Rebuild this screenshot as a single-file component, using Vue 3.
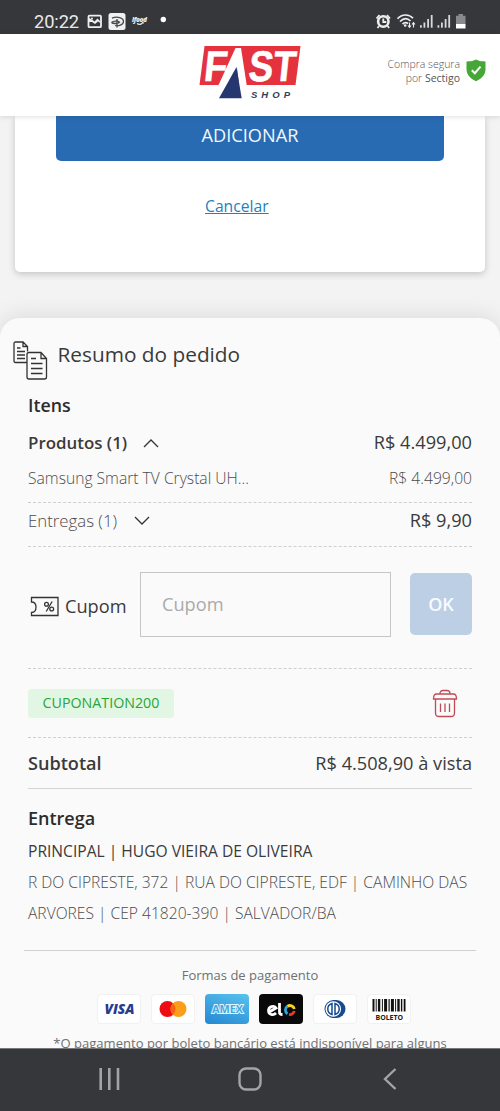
<script setup>
const bars = [
  [0, 2], [3.2, 1], [5.4, 2.4], [9.4, 1], [11.6, 3], [16, 1.2], [18.4, 3], [22.6, 1], [24.8, 2.4], [28.4, 1.4], [31.2, 1.8],
]
const signals = [0, 17.5]
</script>

<template>
  <div class="phone">
    <header class="status">
      <span class="clock">20:22</span>
      <svg class="status-left" width="84" height="20" viewBox="84 11 84 20">
        <rect x="88.500" y="15.700" width="12.500" height="11.500" rx="1" fill="none" stroke="#eee" stroke-width="1.800" />
        <path d="M89 22v-4l3 1.500 2.500 2 3-3 3 3v1.500l-2.500-1.500-3 2.500-3-2z" fill="#eee" />
        <circle cx="92" cy="18.500" r="1" fill="#eee" />
        <rect x="108.500" y="13" width="17" height="17" rx="2.500" fill="#f1f1f2" />
        <path d="M112 18.200c5-2.200 11.500-.5 11.500 3.300 0 3.500-5.500 5-8.500 4M117 19v8.500M111.500 22.500c2-2 7-1.500 8-.3-1.500 1.600-6.500 1.800-8 .3" fill="none" stroke="#47484c" stroke-width="1.300" />
        <text x="132" y="22" font-size="6.500" font-weight="800" font-style="italic" textLength="15">ifood</text>
        <path d="M137 23.500c2 1.500 4 1 5.500-.7M142 22.500l2 .5" fill="none" stroke="#eee" stroke-width="1.200" />
        <circle cx="163.300" cy="19.500" r="2.700" fill="#fff" />
      </svg>
      <svg class="status-right" width="94" height="20" viewBox="374 11 94 20">
        <circle cx="383.300" cy="21.500" r="5.200" fill="none" stroke="#eee" stroke-width="2.600" />
        <path d="M383.300 18.500v3.500h3M379 26l-1.500 2M387.600 26l1.500 2M376.500 18.500l3-3.500M390 18.500l-3-3.500" fill="none" stroke="#eee" stroke-width="1.800" />
        <path d="M397.500 18.800c4.500-5 11.500-5 15.500-.5M400 21.500c3.500-3.500 7.500-3.500 10.500-.5M402.500 24c2-1.800 4-1.800 5.500-.3" fill="none" stroke="#eee" stroke-width="1.700" />
        <circle cx="405.200" cy="25.500" r="1.300" fill="#eee" />
        <path d="M409.500 22.500v4.500m-1.500-1.500l1.500 1.800 1.500-1.800M413.500 27.500v-4.500m-1.500 1.500l1.500-1.800 1.500 1.800" fill="none" stroke="#eee" stroke-width="1.100" />
        <g v-for="s in signals" :key="s" fill="#d8d8da">
          <rect :x="420 + s" y="25.200" width="1.800" height="2.500" />
          <rect :x="423.500 + s" y="22.500" width="1.800" height="5.200" />
          <rect :x="427.200 + s" y="19" width="1.800" height="8.700" />
          <rect :x="430.800 + s" y="15" width="1.800" height="12.700" />
        </g>
        <path d="M458.500 14h4.500v1.700h2.500v8.500h-9.500v-8.500h2.500z" fill="#88898c" />
        <path d="M456 24h9.500v4.500h-9.500z" fill="#fff" />
      </svg>
    </header>

    <div class="topbar">
      <svg class="logo" width="104" height="56" viewBox="198 44 104 56">
        <path d="M204.500 46H300.500L295.500 85H199.500z" fill="#e4333f" />
        <g class="brand">
          <text transform="translate(203 81) skewX(-6)" font-size="43" textLength="23" lengthAdjust="spacingAndGlyphs">F</text>
          <text transform="translate(247.500 81) skewX(-6)" font-size="43" textLength="47" lengthAdjust="spacingAndGlyphs">ST</text>
        </g>
        <path d="M235.500 48H241L249 100H241L237 68 219.500 100H210L219 84z" fill="#fff" />
        <path d="M236.500 67L241.700 98.300H219z" fill="#26376f" />
        <text class="shop" x="251" y="97.500" font-size="9.500" textLength="39">SHOP</text>
      </svg>
      <div class="secure">
        <p>Compra segura<br>por <b>Sectigo</b></p>
        <svg width="20" height="23" viewBox="0 0 20 23">
          <path d="M10 .5C7 2.500 3.500 2.200.500 2.500V10c0 6 4.500 10 9.500 12.300C15 20 19.500 16 19.500 10V2.500C16.500 2.200 13 2.500 10 .5z" fill="#45a735" />
          <path d="M5.800 11.200l3 3 5.700-6.500" fill="none" stroke="#fff" stroke-width="2" />
        </svg>
      </div>
    </div>

    <main>
      <section class="form-card">
        <button class="add">ADICIONAR</button>
        <a class="cancel">Cancelar</a>
      </section>

      <section class="summary">
        <div class="title">
          <svg width="36" height="40" viewBox="0 0 36 40" fill="none" stroke="#333" stroke-width="1.300">
            <path d="M14 21.500H2.500Q1 21.500 1 20V2.500Q1 1 2.500 1H10l4.500 4.500v5M10 1v4.500h4.500M4 7h3.500M4 10.500h8M4 14h8M4 17.500h8" />
            <path d="M16 11.500h12l5.500 6V36q0 2-2 2H16q-2 0-2-2V13.500q0-2 2-2zM28 11.500v6h5.500M18 17.500h5M18 22.500h11.500M18 27.500h11.500M18 32.500h11.500" />
          </svg>
          <h1>Resumo do pedido</h1>
        </div>

        <h2 class="items">Itens</h2>
        <div class="row products">
          <strong>Produtos (1)</strong>
          <svg width="16" height="9" viewBox="0 0 16 9"><path d="M1 8l7-7 7 7" fill="none" stroke="#333" stroke-width="1.300" /></svg>
          <span class="price">R$ 4.499,00</span>
        </div>
        <div class="row item dashed">
          <span>Samsung Smart TV Crystal UH...</span>
          <span class="price-light">R$ 4.499,00</span>
        </div>
        <div class="row deliveries dashed">
          <span class="delivery-name">Entregas (1)</span>
          <svg width="16" height="9" viewBox="0 0 16 9"><path d="M1 1l7 7 7-7" fill="none" stroke="#333" stroke-width="1.300" /></svg>
          <span class="price">R$ 9,90</span>
        </div>

        <div class="coupon dashed">
          <svg width="30" height="22" viewBox="0 0 30 22" fill="none" stroke="#333" stroke-width="1.300">
            <path d="M1.500 1.500H28v18H1.500v-3c3 0 4.500-2.500 4.500-5.500s-1.500-5-4.500-5z" />
            <circle cx="16.500" cy="8.200" r="1.900" /><circle cx="21.700" cy="13" r="1.900" /><path d="M22.200 5.500l-6 10" />
          </svg>
          <label>Cupom</label>
          <div class="field">Cupom</div>
          <button class="ok">OK</button>
        </div>

        <div class="row applied dashed">
          <span class="tag">CUPONATION200</span>
          <svg width="26" height="29" viewBox="0 0 26 29" fill="none" stroke="#c14b55" stroke-width="1.300">
            <path d="M8 4.500c0-2 1.200-3 3-3h4c1.800 0 3 1 3 3M4.500 5h17q3 0 3 5h-23q0-5 3-5zM3.500 10v14q0 3.500 3.500 3.500h12q3.500 0 3.500-3.500V10M8.500 14.500v8.500M13 14.500v8.500M17.500 14.500v8.500" />
          </svg>
        </div>

        <div class="row subtotal">
          <strong>Subtotal</strong>
          <span class="price total">R$ 4.508,90 à vista</span>
        </div>

        <div class="address">
          <h2>Entrega</h2>
          <p class="who">PRINCIPAL | HUGO VIEIRA DE OLIVEIRA</p>
          <p>R DO CIPRESTE, 372 | RUA DO CIPRESTE, EDF | CAMINHO DAS</p>
          <p>ARVORES | CEP 41820-390 | SALVADOR/BA</p>
        </div>

        <div class="payment">
          <p class="pay-title">Formas de pagamento</p>
          <div class="cards">
            <div class="card">
              <svg width="42" height="28" viewBox="0 0 42 28"><text x="6.500" y="19" font-size="14" font-weight="800" font-style="italic" textLength="30" lengthAdjust="spacingAndGlyphs" fill="#283c8e">VISA</text></svg>
            </div>
            <div class="card">
              <svg width="42" height="28" viewBox="0 0 42 28"><circle cx="15.500" cy="14" r="8" fill="#ed0c12" /><circle cx="26.500" cy="14" r="8" fill="#fb9f1b" /><path d="M21 8.200a8 8 0 0 1 0 11.600 8 8 0 0 1 0-11.600z" fill="#fa6112" /></svg>
            </div>
            <div class="card amex">
              <svg width="44" height="30" viewBox="0 0 44 30"><text x="7" y="19" font-size="10.500" font-weight="700" textLength="31" lengthAdjust="spacingAndGlyphs" fill="#3fa9e3" stroke="#e5f6ff" stroke-width="1.800" paint-order="stroke">AMEX</text></svg>
            </div>
            <div class="card elo">
              <svg width="44" height="30" viewBox="0 0 44 30" fill="none" stroke-width="2.800">
                <path d="M9.500 18.500l7.500-4.500c-2-3-7.500-1.500-7.500 2.500 0 4.500 5 5.300 7.500 2.500M20.500 9v9.500q0 2 3 2" stroke="#fff" />
                <path d="M28.500 19.800a4.500 4.500 0 0 1 0-7.600" stroke="#30a7df" /><path d="M28.500 12.200a4.500 4.500 0 0 1 6.800 2.800" stroke="#fbd31d" /><path d="M35.300 17a4.500 4.500 0 0 1-5.300 3.400" stroke="#e83b31" />
              </svg>
            </div>
            <div class="card">
              <svg width="42" height="28" viewBox="0 0 42 28"><path d="M19 5h3.500a9 9 0 0 1 0 18H19z" fill="#164b91" /><circle cx="19.500" cy="14" r="9" fill="#164b91" /><circle cx="19.300" cy="14" r="7.800" fill="#fff" /><path d="M18 8.500a5.700 5.700 0 0 0 0 11zM21 8.500a5.700 5.700 0 0 1 0 11z" fill="none" stroke="#164b91" stroke-width="1.500" /></svg>
            </div>
            <div class="card">
              <svg width="42" height="28" viewBox="0 0 42 28">
                <rect v-for="b in bars" :key="b[0]" :x="4.500 + b[0]" y="4" :width="b[1]" height="12.500" fill="#111" />
                <text x="7.500" y="24.500" font-size="7" font-weight="700" textLength="27.500" fill="#222">BOLETO</text>
              </svg>
            </div>
          </div>
          <p class="note">*O pagamento por boleto bancário está indisponível para alguns</p>
        </div>
      </section>
    </main>

    <nav>
      <svg width="22" height="22" viewBox="0 0 22 22"><path d="M1.700 0v22M10.300 0v22M19 0v22" stroke="#a4a4a8" stroke-width="2.600" /></svg>
      <svg width="24" height="24" viewBox="0 0 24 24"><rect x="1.500" y="1.500" width="21" height="21" rx="6.500" fill="none" stroke="#a4a4a8" stroke-width="2.400" /></svg>
      <svg width="14" height="22" viewBox="0 0 14 22"><path d="M12.500 1L2 11l10.500 10" fill="none" stroke="#a4a4a8" stroke-width="2.400" /></svg>
    </nav>
  </div>
</template>

<style>
body { margin: 0; }
</style>

<style scoped>
* { box-sizing: border-box; }
h1, h2, p { margin: 0; }
.phone {
  width: 500px;
  height: 1111px;
  display: flex;
  flex-direction: column;
  overflow: hidden;
  background: #f3f3f3;
  font-family: "Open Sans", "Noto Sans", sans-serif;
  color: #3a3a3a;
}
svg { display: block; flex: none; }
.status {
  height: 34px;
  flex: none;
  background: #36373b;
  display: flex;
  align-items: center;
  padding: 10px 32px 0 34px;
}
.clock {
  width: 50px;
  font: 18.300px/24px Roboto, sans-serif;
  letter-spacing: -.1px;
  color: #e8e8ea;
}
.status-left text { fill: #eee; }
.status-right { margin-left: auto; }
.status svg { margin-top: -2px; }
.topbar {
  height: 82px;
  flex: none;
  display: flex;
  justify-content: space-between;
  padding: 10px 14px 0 198px;
  background: #fff;
  box-shadow: 0 1px 5px rgba(0, 0, 0, .12);
  position: relative;
}
.brand text { font-family: "Liberation Sans", sans-serif; font-weight: 700; fill: #fff; stroke: #fff; stroke-width: .6px; }
.shop { font-family: "Liberation Sans", sans-serif; font-weight: 700; font-style: italic; fill: #343c60; }
.secure { display: flex; gap: 6px; padding-top: 13px; height: 50px; }
.secure svg { margin-top: 2px; }
.secure p { font-size: 10.500px; line-height: 14px; font-weight: 300; text-align: right; color: #555; }
.secure b { font-weight: 400; }
main { flex: 1; min-height: 0; overflow: hidden; }
.form-card {
  width: 470px;
  height: 156px;
  margin: 0 15px 46px;
  background: #fff;
  border-radius: 0 0 5px 5px;
  box-shadow: 0 2px 7px rgba(0, 0, 0, .2);
}
button { font-family: inherit; border: 0; padding: 0; }
.add {
  display: block;
  width: 388px;
  height: 45px;
  margin: 0 auto;
  padding-bottom: 8px;
  border-radius: 0 0 5px 5px;
  background: #296bb3;
  color: #f2f7fc;
  font-size: 18.200px;
}
.cancel {
  display: block;
  width: max-content;
  margin: 34px 0 0 190px;
  font-size: 15.700px;
  line-height: 22px;
  color: #257fbe;
  text-decoration: underline;
}
.summary {
  padding: 0 28px;
  background: #fafafa;
  border-radius: 20px 20px 0 0;
  box-shadow: 0 -2px 22px rgba(0, 0, 0, .1);
}
.title { height: 73px; display: flex; align-items: center; gap: 8.500px; margin-left: -15px; }
.title svg { margin-top: 12px; }
h1 { font-size: 20.800px; font-weight: 400; white-space: nowrap; margin-top: -2px; }
h2 { font-size: 17.800px; line-height: 30px; font-weight: 600; color: #2c2c2c; }
.items { margin-top: -1px; padding-bottom: 1px; }
.row { display: flex; align-items: center; white-space: nowrap; }
.dashed { border-bottom: 1px dashed #cfcfcf; }
.price { margin-left: auto; font-size: 18.200px; }
.products { height: 44px; }
.products .price { margin-top: -2px; }
.products strong { font-size: 16.900px; font-weight: 600; margin: -2px 16px 0 0; }
.item { height: 38px; padding-bottom: 11px; font-size: 15.650px; font-weight: 300; color: #4c4c4c; justify-content: space-between; }
.deliveries { height: 44px; padding-bottom: 9px; }
.deliveries svg { margin-top: 1px; }
.delivery-name { font-size: 16.800px; font-weight: 300; margin-right: 17px; color: #4c4c4c; }
.coupon { height: 122px; padding: 25px 0 31px 2px; display: flex; align-items: center; }
.coupon label { font-size: 18.200px; margin-left: 5px; width: 75px; padding-top: 2px; }
.coupon svg { margin-top: 4px; }
.field {
  width: 251px;
  height: 65px;
  border: 1px solid #c6c6c6;
  padding-left: 21px;
  font-size: 18.200px;
  line-height: 63px;
  color: #aaa;
}
.ok {
  width: 62px;
  height: 62px;
  margin: -1px 0 0 auto;
  border-radius: 5px;
  background: #bccfe5;
  color: #f8fbff;
  font-size: 18px;
  font-weight: 600;
}
.applied { height: 69px; justify-content: space-between; padding-right: 14px; }
.tag { width: 146px; height: 29px; border-radius: 4px; background: #e2f7e3; color: #28a53a; font-size: 14.250px; line-height: 28px; text-align: center; }
.subtotal { height: 51px; border-bottom: 1px solid #d4d4d4; }
.subtotal strong { font-size: 18.100px; font-weight: 600; }
.address { padding-top: 14px; height: 161px; }
.address h2 { padding-bottom: 1px; box-sizing: content-box; font-size: 18px; }
.address p { font-size: 15.620px; line-height: 31px; white-space: nowrap; font-weight: 300; color: #4c4c4c; }
.address .who { font-weight: 400; padding-top: 2px; color: #3a3a3a; font-size: 15.600px; }
.payment { margin: 0 -4px; border-top: 1px solid #d0d0d0; padding-top: 13px; height: 110px; }
.pay-title { font-size: 13px; line-height: 22px; text-align: center; color: #707070; }
.cards { display: flex; gap: 10px; margin: 8px 0 9px 73px; }
.card { width: 44px; height: 30px; border: 1px solid #f1f1f1; border-radius: 4px; background: #fff; }
.amex { border: 0; background: linear-gradient(20deg, #2388d3, #59c2ed); }
.elo { border: 0; background: #090909; }
.note { font-size: 13.050px; line-height: 20px; white-space: nowrap; text-align: center; color: #707070; }
nav {
  height: 63px;
  flex: none;
  display: flex;
  align-items: center;
  justify-content: space-between;
  padding: 0 103px 3px 99px;
  background: #36373b;
  border-top: 1px solid #77787b;
}
nav svg:nth-child(2) { margin-right: 4px; }
</style>
